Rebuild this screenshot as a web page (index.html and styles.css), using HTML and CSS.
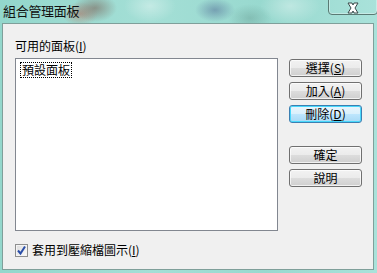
FILE: index.html
```html
<!DOCTYPE html>
<html lang="zh-Hant">
<head>
<meta charset="utf-8">
<title>組合管理面板</title>
<link rel="stylesheet" href="styles.css">
</head>
<body>
<div class="window">
  <div class="titlebar">
    <span class="title">組合管理面板</span>
    <div class="close">
      <svg width="20" height="14" viewBox="0 0 20 14">
        <path d="M5 2 L9 2 L10 4 L11 2 L15 2 L12 7 L15 12 L11 12 L10 10 L9 12 L5 12 L8 7 Z" fill="#ffffff" stroke="#3a4a4a" stroke-width="1" stroke-linejoin="round"/>
      </svg>
    </div>
  </div>
  <div class="client">
    <div class="main">
      <div class="left">
        <div class="label">可用的面板(<u>I</u>)</div>
        <div class="listbox">
          <span class="item">預設面板</span>
        </div>
      </div>
      <div class="buttons">
        <button class="btn">選擇(<u>S</u>)</button>
        <button class="btn">加入(<u>A</u>)</button>
        <button class="btn default">刪除(<u>D</u>)</button>
        <button class="btn gap">確定</button>
        <button class="btn">說明</button>
      </div>
    </div>
    <div class="footer">
      <span class="check">
        <svg width="13" height="13" viewBox="0 0 13 13">
          <path d="M3 6.5 L5.5 9.5 L10 2.5" fill="none" stroke="#2a4ea8" stroke-width="2"/>
        </svg>
      </span>
      <span class="label">套用到壓縮檔圖示(<u>I</u>)</span>
    </div>
  </div>
</div>
</body>
</html>
```

FILE: styles.css
```css
html, body {
  margin: 0;
  padding: 0;
}
body {
  width: 377px;
  height: 273px;
  overflow: hidden;
  font-family: "Noto Sans CJK TC", "Noto Sans", sans-serif;
  font-size: 12px;
  color: #000;
}
.window {
  width: 377px;
  height: 273px;
  background:
    radial-gradient(ellipse 22px 14px at 95px 8px, rgba(120,90,80,0.55), rgba(120,90,80,0) 100%),
    radial-gradient(ellipse 18px 12px at 80px 14px, rgba(200,60,40,0.35), rgba(200,60,40,0) 100%),
    radial-gradient(ellipse 20px 12px at 215px 10px, rgba(70,90,140,0.45), rgba(70,90,140,0) 100%),
    radial-gradient(ellipse 26px 16px at 150px 6px, rgba(255,255,255,0.35), rgba(255,255,255,0) 100%),
    radial-gradient(ellipse 30px 18px at 290px 6px, rgba(255,255,255,0.35), rgba(255,255,255,0) 100%),
    radial-gradient(ellipse 22px 14px at 250px 18px, rgba(90,140,130,0.35), rgba(90,140,130,0) 100%),
    linear-gradient(90deg, #93d7cc 0%, #a4dfd6 40%, #98d9cf 70%, #a9e2da 100%);
  display: flex;
  flex-direction: column;
}
.titlebar {
  height: 23px;
  position: relative;
  flex: none;
}
.title {
  display: block;
  padding: 3px 0 0 3px;
  font-size: 13px;
  line-height: 16px;
  letter-spacing: -0.3px;
  color: #101010;
}
.close {
  position: absolute;
  left: 328px;
  top: -2px;
  width: 50px;
  height: 17px;
  border: 1px solid #5a7a74;
  border-radius: 0 0 4px 4px;
  box-shadow: inset 0 0 0 1px rgba(255,255,255,0.35);
  display: flex;
  justify-content: center;
  align-items: center;
  box-sizing: border-box;
}
.close svg {
  margin-top: 2px;
}
.client {
  margin-left: 2px;
  width: 372px;
  height: 247px;
  box-sizing: border-box;
  border: 1px solid #7f9f9a;
  background: #f0f0f0;
  display: flex;
  flex-direction: column;
  padding: 14px 0 0 12px;
}
.main {
  display: flex;
}
.left {
  display: flex;
  flex-direction: column;
}
.label {
  line-height: 16px;
  height: 16px;
  white-space: nowrap;
}
u {
  text-decoration: underline;
}
.listbox {
  margin-top: 4px;
  width: 263px;
  height: 173px;
  box-sizing: border-box;
  border: 1px solid #828790;
  background: #ffffff;
  padding: 2px 0 0 5px;
}
.item {
  display: inline-block;
  line-height: 14px;
  outline: 1px dotted #000;
  outline-offset: 0;
  padding: 0 1px;
}
.buttons {
  display: flex;
  flex-direction: column;
  gap: 5px;
  margin-left: 11px;
  padding-top: 21px;
}
.btn {
  width: 73px;
  height: 18px;
  margin: 0;
  padding: 0;
  font-family: inherit;
  font-size: 12px;
  line-height: 14px;
  color: #000;
  border: 1px solid #707070;
  border-radius: 3px;
  background: linear-gradient(#f2f2f2 0%, #ebebeb 50%, #dddddd 50%, #cfcfcf 100%);
  box-shadow: inset 0 0 0 1px rgba(255,255,255,0.7);
}
.btn.default {
  border-color: #3c7fb1;
  background: linear-gradient(#eaf6fd 0%, #d9f0fc 50%, #bee6fd 50%, #a7d9f5 100%);
  box-shadow: inset 0 0 0 1px #48d8fb;
}
.btn.gap {
  margin-top: 18px;
}
.footer {
  display: flex;
  align-items: center;
  margin-top: 12px;
  height: 14px;
}
.check {
  width: 13px;
  height: 13px;
  box-sizing: border-box;
  border: 1px solid #8e8f8f;
  background: linear-gradient(135deg, #dcdcdc, #fbfbfb);
  box-shadow: inset 0 0 0 1px #f4f4f4;
  display: flex;
  margin-right: 4px;
}
.check svg {
  margin: -1px;
}
```
